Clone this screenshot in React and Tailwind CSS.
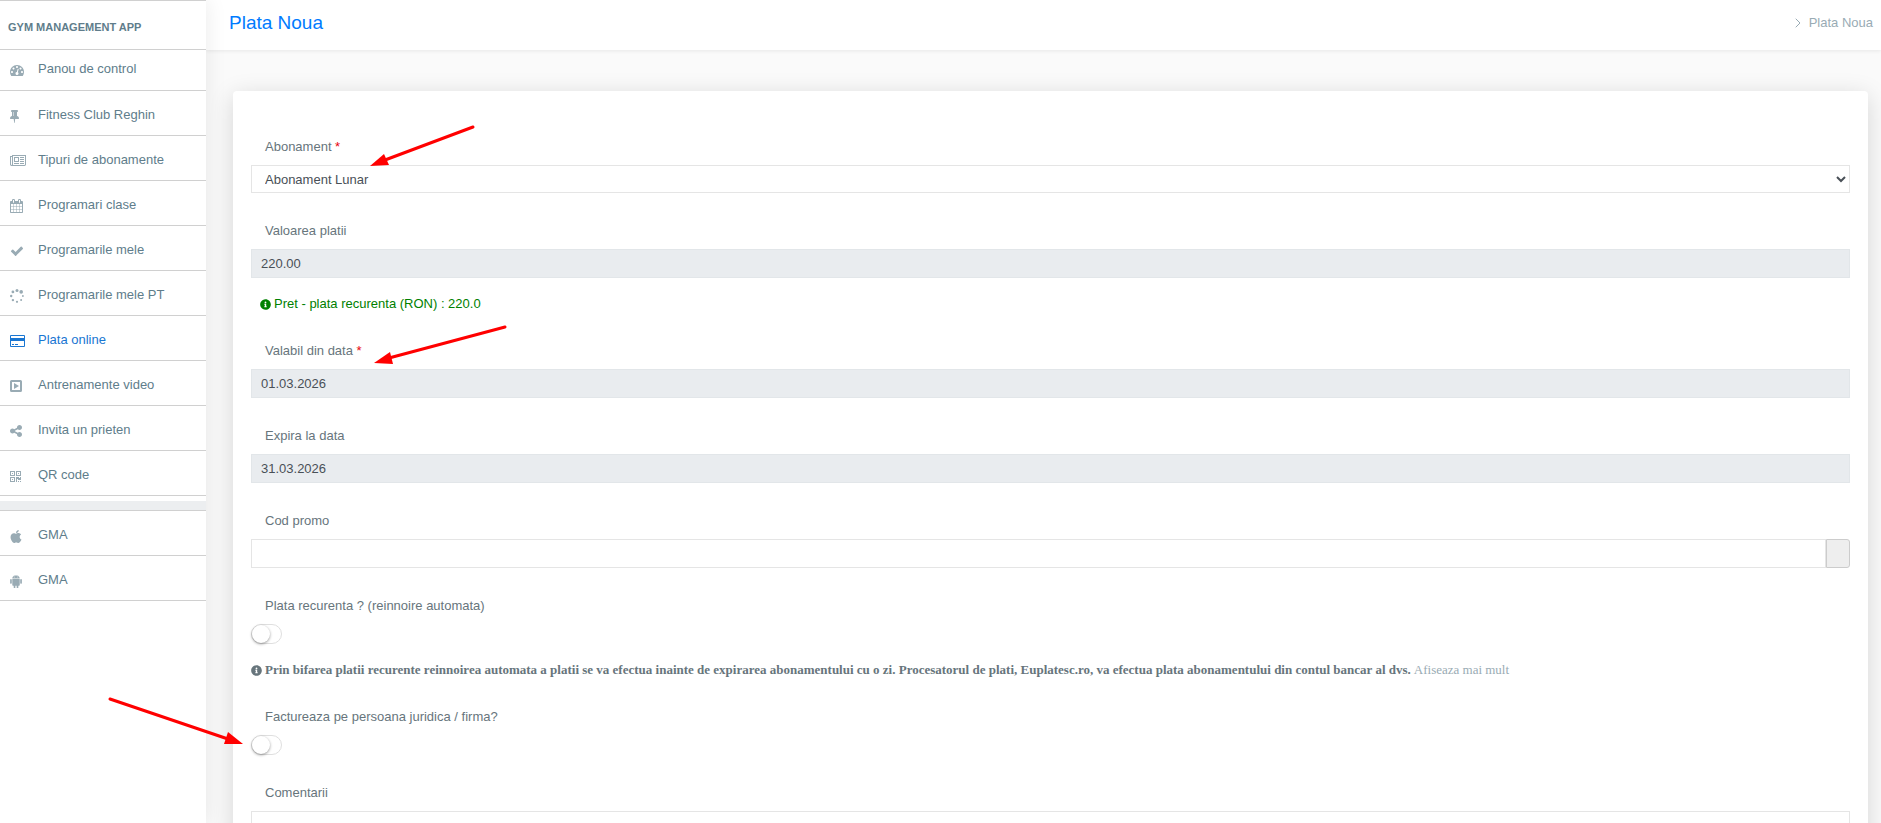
import { useState } from "react"
import { FaApple, FaInfoCircle } from "react-icons/fa"
import { AiFillAndroid } from "react-icons/ai"
import { ChevronRight } from "lucide-react"

const Glyph = ({ d, viewBox = "0 0 1792 1792", cls = "w-[14px] h-[14px]" }) => (
  <svg className={cls} viewBox={viewBox} fill="currentColor"><path d={d} /></svg>
)

const GAUGE = "M384 1152q0-53-37.5-90.5t-90.5-37.5-90.5 37.5-37.5 90.5 37.5 90.5 90.5 37.5 90.5-37.5 37.5-90.5zm192-448q0-53-37.5-90.5t-90.5-37.5-90.5 37.5-37.5 90.5 37.5 90.5 90.5 37.5 90.5-37.5 37.5-90.5zm428 481l101-382q6-26-7.5-48.5t-38.5-29.5-48 6.5-30 39.5l-101 382q-60 5-107 43.5t-63 98.5q-20 77 20 146t117 89 146-20 89-117q16-60-6-117t-72-91zm660-33q0-53-37.5-90.5t-90.5-37.5-90.5 37.5-37.5 90.5 37.5 90.5 90.5 37.5 90.5-37.5 37.5-90.5zm-640-640q0-53-37.5-90.5t-90.5-37.5-90.5 37.5-37.5 90.5 37.5 90.5 90.5 37.5 90.5-37.5 37.5-90.5zm448 192q0-53-37.5-90.5t-90.5-37.5-90.5 37.5-37.5 90.5 37.5 90.5 90.5 37.5 90.5-37.5 37.5-90.5zm320 448q0 261-141 483-19 29-54 29h-1402q-35 0-54-29-141-221-141-483 0-182 71-348t191-286 286-191 348-71 348 71 286 191 191 286 71 348z"
const PIN = "M800 864v-448q0-14-9-23t-23-9-23 9-9 23v448q0 14 9 23t23 9 23-9 9-23zm672 352q0 26-19 45t-45 19h-429l-51 483q-2 12-10.5 20.5t-20.5 8.5h-1q-27 0-32-27l-76-485h-404q-26 0-45-19t-19-45q0-123 78.5-221.5t177.5-98.5v-512q-52 0-90-38t-38-90 38-90 90-38h640q52 0 90 38t38 90-38 90-90 38v512q99 0 177.5 98.5t78.5 221.5z"
const NEWS = "M1024 512h-384v384h384v-384zm128 640v128h-640v-128h640zm0-768v640h-640v-640h640zm640 768v128h-512v-128h512zm0-256v128h-512v-128h512zm0-256v128h-512v-128h512zm0-256v128h-512v-128h512zm-1536 960v-960h-128v960q0 26 19 45t45 19 45-19 19-45zm1664 0v-1088h-1536v1088q0 33-11 64h1483q26 0 45-19t19-45zm128-1216v1216q0 80-56 136t-136 56h-1664q-80 0-136-56t-56-136v-1088h256v-128h1792z"
const CALENDAR = "M192 1664h288v-288h-288v288zm352 0h320v-288h-320v288zm-352-352h288v-320h-288v320zm352 0h320v-320h-320v320zm-352-384h288v-288h-288v288zm736 736h320v-288h-320v288zm-384-736h320v-288h-320v288zm768 736h288v-288h-288v288zm-384-352h320v-320h-320v320zm-352-864v-288q0-13-9.5-22.5t-22.5-9.5h-64q-13 0-22.5 9.5t-9.5 22.5v288q0 13 9.5 22.5t22.5 9.5h64q13 0 22.5-9.5t9.5-22.5zm736 864h288v-320h-288v320zm-384-384h320v-288h-320v288zm384 0h288v-288h-288v288zm32-480v-288q0-13-9.5-22.5t-22.5-9.5h-64q-13 0-22.5 9.5t-9.5 22.5v288q0 13 9.5 22.5t22.5 9.5h64q13 0 22.5-9.5t9.5-22.5zm384-64v1280q0 52-38 90t-90 38h-1408q-52 0-90-38t-38-90v-1280q0-52 38-90t90-38h128v-96q0-66 47-113t113-47h64q66 0 113 47t47 113v96h384v-96q0-66 47-113t113-47h64q66 0 113 47t47 113v96h128q52 0 90 38t38 90z"
const CHECK = "M1671 566q0 40-28 68l-724 724-136 136q-28 28-68 28t-68-28l-136-136-362-362q-28-28-28-68t28-68l136-136q28-28 68-28t68 28l294 295 656-657q28-28 68-28t68 28l136 136q28 28 28 68z"
const SHARE = "M1344 1024q133 0 226.5 93.5t93.5 226.5-93.5 226.5-226.5 93.5-226.5-93.5-93.5-226.5q0-12 2-34l-360-180q-92 86-218 86-133 0-226.5-93.5t-93.5-226.5 93.5-226.5 226.5-93.5q126 0 218 86l360-180q-2-22-2-34 0-133 93.5-226.5t226.5-93.5 226.5 93.5 93.5 226.5-93.5 226.5-226.5 93.5q-126 0-218-86l-360 180q2 22 2 34t-2 34l360 180q92-86 218-86z"

const SpinnerIcon = () => (
  <svg className="w-[14px] h-[14px]" viewBox="0 0 14 14" fill="currentColor">
    <circle cx="7" cy="1.5" r="1.5" />
    <circle cx="11.2" cy="2.9" r="1.8" />
    <circle cx="12.9" cy="7" r="0.9" />
    <circle cx="11.1" cy="11.1" r="1" />
    <circle cx="7" cy="12.8" r="1.1" />
    <circle cx="2.9" cy="11.1" r="1.2" />
    <circle cx="1.2" cy="7" r="1.2" />
    <circle cx="2.9" cy="2.9" r="1.4" />
  </svg>
)

const CardIcon = () => (
  <svg className="w-[15px] h-[12px]" viewBox="0 0 15 12" fill="currentColor">
    <path fillRule="evenodd" d="M1 0h13a1 1 0 011 1v10a1 1 0 01-1 1H1a1 1 0 01-1-1V1a1 1 0 011-1zM1 1v2h13V1zM1 6v5h13V6z" />
    <path d="M2 9h2v1H2zM5 9h3v1H5z" />
  </svg>
)

const PlayBox = () => (
  <svg className="w-[12px] h-[12px]" viewBox="0 0 12 12" fill="currentColor">
    <path fillRule="evenodd" d="M1.5 0h9A1.5 1.5 0 0112 1.5v9a1.5 1.5 0 01-1.5 1.5h-9A1.5 1.5 0 010 10.5v-9A1.5 1.5 0 011.5 0zM2 2v8h8V2z" />
    <path d="M4 3l5 3-5 3z" />
  </svg>
)

const QrIcon = () => (
  <svg className="w-[11px] h-[11px]" viewBox="0 0 11 11" fill="currentColor">
    <path fillRule="evenodd" d="M0 0h5v5H0zM1 1v3h3V1zM6 0h5v5H6zM7 1v3h3V1zM0 6h5v5H0zM1 7v3h3V7z" />
    <path d="M2 2h1v1H2zM8 2h1v1H8zM2 8h1v1H2zM6 6h3v1h1V6h1v3H8V8H7v3H6zM8 10h1v1H8zM10 10h1v1h-1z" />
  </svg>
)

const MENU = [
  { label: "Panou de control", icon: <Glyph d={GAUGE} /> },
  { label: "Fitness Club Reghin", icon: <Glyph d={PIN} viewBox="320 128 1152 1664" cls="w-[9px] h-[13px]" /> },
  { label: "Tipuri de abonamente", icon: <Glyph d={NEWS} viewBox="0 128 2048 1536" cls="w-[16px] h-[12px]" /> },
  { label: "Programari clase", icon: <Glyph d={CALENDAR} viewBox="64 0 1664 1792" cls="w-[13px] h-[14px]" /> },
  { label: "Programarile mele", icon: <Glyph d={CHECK} /> },
  { label: "Programarile mele PT", icon: <SpinnerIcon /> },
  { label: "Plata online", icon: <CardIcon />, active: true },
  { label: "Antrenamente video", icon: <PlayBox /> },
  { label: "Invita un prieten", icon: <Glyph d={SHARE} viewBox="128 128 1536 1536" cls="w-[12px] h-[12px]" /> },
  { label: "QR code", icon: <QrIcon /> },
]

const APPS = [
  { label: "GMA", icon: <FaApple className="w-[12px] h-[13px]" viewBox="0 32 384 448" /> },
  { label: "GMA", icon: <AiFillAndroid className="w-[12px] h-[13px]" viewBox="120 90 784 844" /> },
]

const NavItem = ({ item, first }) => (
  <li className={`border-b border-[#d0d0d0] ${first ? "h-[41px] pb-[2px]" : "h-[45px] pt-1"}`}>
    <a href="#" className={`flex h-full items-center pl-[10px] ${item.active ? "text-[#1976d2]" : "text-[#607d8b]"}`}>
      <span className={`flex w-7 shrink-0 pt-[2px] ${item.active ? "" : "text-[#99abb4]"}`}>{item.icon}</span>
      {item.label}
    </a>
  </li>
)

const Label = ({ id, required, children }) => (
  <label htmlFor={id} className="block pl-[14px] mb-[7px] leading-[22px]">
    {children}{required && <span className="text-red-600"> *</span>}
  </label>
)

const ReadOnly = ({ id, label, value, required }) => (
  <div>
    <Label id={id} required={required}>{label}</Label>
    <input id={id} readOnly value={value} className="block w-full h-[29px] px-[9px] border border-[#e2e6e9] bg-[#e9ecef] text-[#495057] outline-none" />
  </div>
)

const Toggle = ({ id, label, checked, onChange }) => (
  <div>
    <Label id={id}>{label}</Label>
    <input
      id={id}
      type="checkbox"
      checked={checked}
      onChange={(e) => onChange(e.target.checked)}
      className="block appearance-none w-[31px] h-5 rounded-full border border-[#dfdfdf] bg-white checked:bg-[#64bd63] before:block before:size-[18px] before:rounded-full before:bg-white before:shadow-[0_1px_3px_rgba(0,0,0,0.4)] checked:before:ml-[11px]"
    />
  </div>
)

// tail point, then the three corners of the head
const ARROWS = [
  { from: [473, 127], to: [385, 160], head: "370,166 384,154 389,165" },
  { from: [505, 327], to: [389, 358], head: "374,363 390,352 393,364" },
  { from: [110, 699], to: [228, 739], head: "243,744 228,732 224,744" },
]

export default function App() {
  const [plan, setPlan] = useState("lunar")
  const [promo, setPromo] = useState("")
  const [recurring, setRecurring] = useState(false)
  const [company, setCompany] = useState(false)
  const [comments, setComments] = useState("")

  return (
    <div className="relative flex h-screen overflow-hidden bg-[#fafafa] font-['Liberation_Sans',Arial,sans-serif] text-[13px] text-[#67757c]">
      <aside className="relative z-10 w-[206px] shrink-0 bg-white border-t border-[#d0d0d0] shadow-[1px_0_20px_rgba(0,0,0,0.08)]">
        <div className="flex h-[49px] items-center border-b border-[#d0d0d0] pl-2 pt-1 text-[11px] font-bold text-[#607d8b]">
          GYM MANAGEMENT APP
        </div>
        <nav>
          <ul>
            {MENU.map((m, i) => <NavItem key={m.label} item={m} first={i === 0} />)}
          </ul>
          <div className="mt-[5px] h-[10px] border-b border-[#d0d0d0] bg-[#eceef0]" />
          <ul>
            {APPS.map((m, i) => <NavItem key={i} item={m} />)}
          </ul>
        </nav>
      </aside>

      <main className="min-w-0 flex-1">
        <header className="flex h-[50px] items-center justify-between bg-white pl-[23px] pr-2 pb-1 shadow-[0_1px_4px_rgba(0,0,0,0.08)]">
          <h1 className="text-[19px] text-[#007bff]">Plata Noua</h1>
          <div className="flex items-center gap-[3px] text-[#99abb4]">
            <ChevronRight size={16} strokeWidth={1.5} />
            <a href="#">Plata Noua</a>
          </div>
        </header>

        <form className="ml-[27px] mr-[13px] mt-[41px] flex flex-col gap-[27px] rounded bg-white px-[18px] pt-[45px] pb-8 shadow-[0_5px_25px_rgba(0,0,0,0.15)]">
          <div>
            <Label id="plan" required>Abonament</Label>
            <select id="plan" value={plan} onChange={(e) => setPlan(e.target.value)} className="block w-full h-7 pl-[9px] border border-[#e5e5e5] bg-white text-[#495057]">
              <option value="lunar">Abonament Lunar</option>
            </select>
          </div>

          <div>
            <ReadOnly id="amount" label="Valoarea platii" value="220.00" />
            <p className="mt-[17px] flex items-center gap-[3px] pl-[9px] leading-[18px] text-[green]">
              <FaInfoCircle className="w-[11px] h-[11px]" /> Pret - plata recurenta (RON) : 220.0
            </p>
          </div>

          <ReadOnly id="from" label="Valabil din data" value="01.03.2026" required />
          <ReadOnly id="until" label="Expira la data" value="31.03.2026" />

          <div>
            <Label id="promo">Cod promo</Label>
            <div className="flex">
              <input id="promo" value={promo} onChange={(e) => setPromo(e.target.value)} className="h-[29px] min-w-0 flex-1 border border-[#e5e5e5] px-[9px]" />
              <button type="button" aria-label="Cod promo" className="w-6 rounded-r-[3px] border border-[#ccc] bg-[#eee]" />
            </div>
          </div>

          <div>
            <Toggle id="recurring" label="Plata recurenta ? (reinnoire automata)" checked={recurring} onChange={setRecurring} />
            <p className="mt-[17px] flex items-center gap-[3px] font-['Liberation_Serif','Times_New_Roman',serif] leading-[18px]">
              <FaInfoCircle className="w-[11px] h-[11px]" />
              <b>Prin bifarea platii recurente reinnoirea automata a platii se va efectua inainte de expirarea abonamentului cu o zi. Procesatorul de plati, Euplatesc.ro, va efectua plata abonamentului din contul bancar al dvs.</b>
              <a href="#" className="text-[#99abb4]">Afiseaza mai mult</a>
            </p>
          </div>

          <Toggle id="company" label="Factureaza pe persoana juridica / firma?" checked={company} onChange={setCompany} />

          <div>
            <Label id="comments">Comentarii</Label>
            <textarea id="comments" rows={4} value={comments} onChange={(e) => setComments(e.target.value)} className="block w-full border border-[#e5e5e5] px-[9px] py-1" />
          </div>
        </form>
      </main>

      <svg className="pointer-events-none absolute left-0 top-0 z-20 w-[520px] h-[760px]" viewBox="0 0 520 760" stroke="red" strokeWidth="3" strokeLinecap="round" fill="red">
        {ARROWS.map((a) => (
          <g key={a.head}>
            <line x1={a.from[0]} y1={a.from[1]} x2={a.to[0]} y2={a.to[1]} />
            <polygon points={a.head} stroke="none" />
          </g>
        ))}
      </svg>
    </div>
  )
}
